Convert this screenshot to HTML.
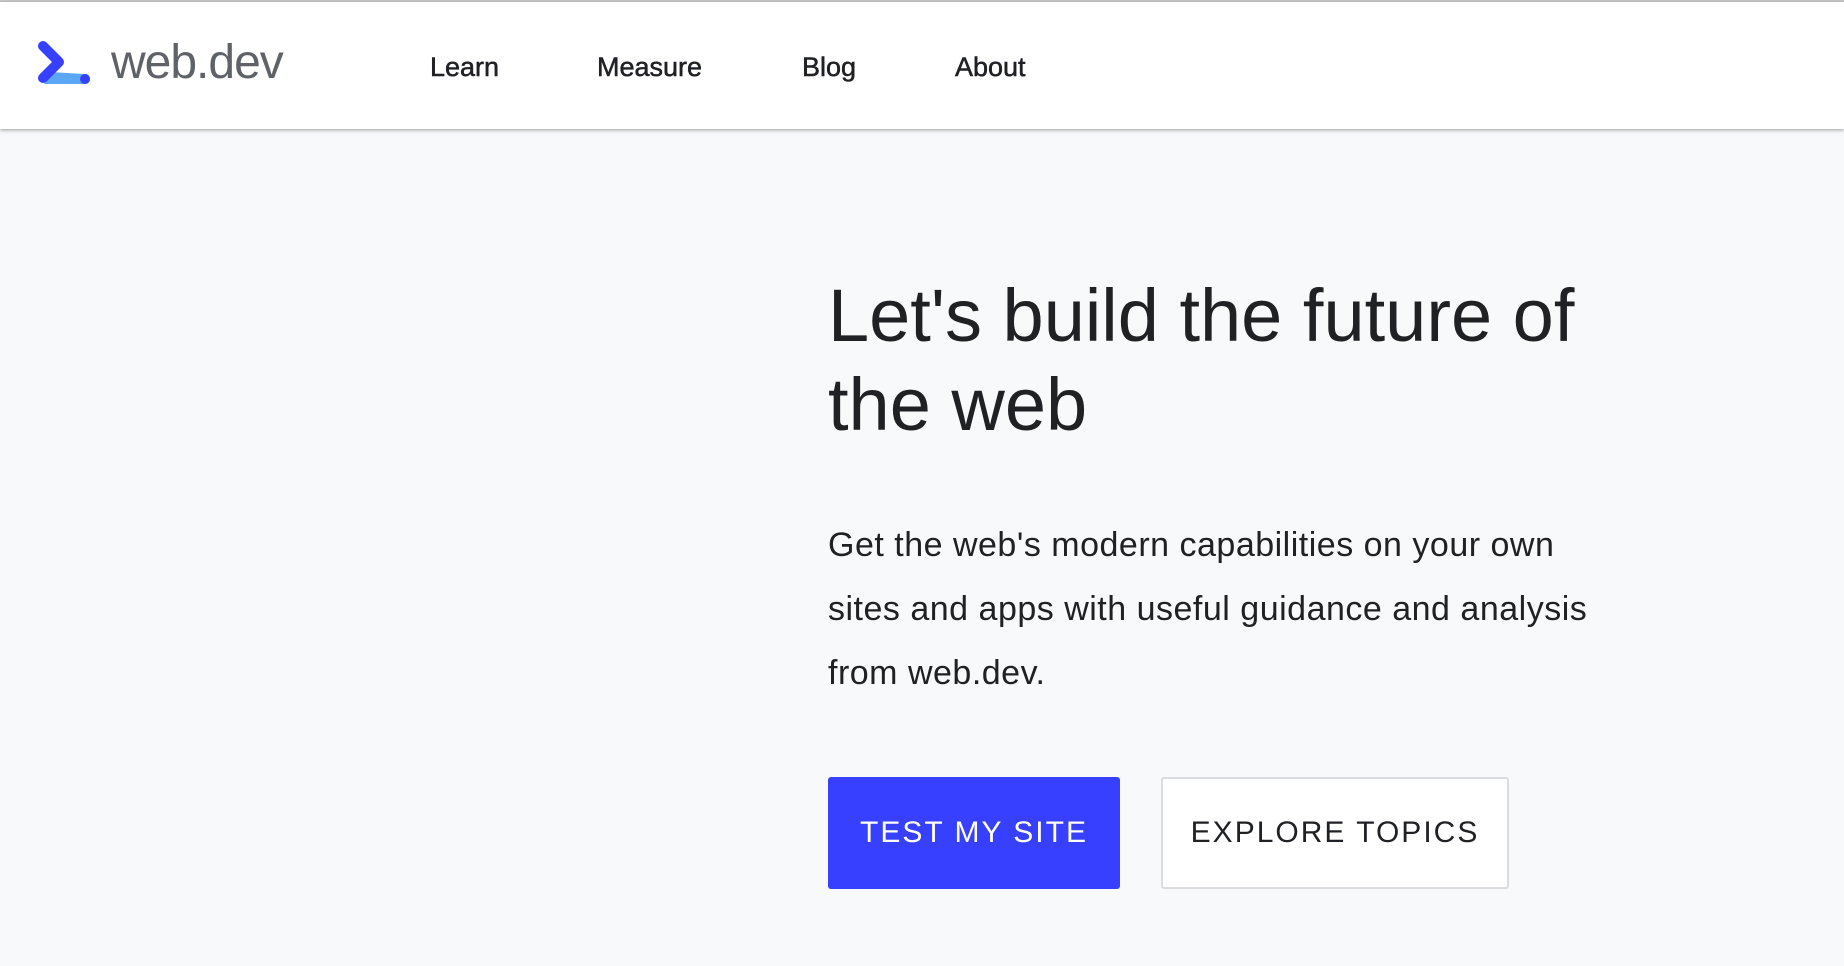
<!DOCTYPE html>
<html><head><meta charset="utf-8"><style>
*{margin:0;padding:0;box-sizing:border-box}
body{width:1844px;height:966px;overflow:hidden;background:#f8f9fa;font-family:"Liberation Sans",sans-serif;color:#202124}
.top{position:absolute;left:0;top:0;width:1844px;height:2px;background:#c8c8c8}
header{position:absolute;left:0;top:2px;width:1844px;height:127px;background:#fff;box-shadow:0 1px 3px rgba(0,0,0,.3),0 2px 6px rgba(0,0,0,.08)}
.logo{position:absolute;left:36px;top:38px}
.brand{position:absolute;left:111px;top:33px;font-size:48px;color:#5f6368;letter-spacing:-1px}
nav a{position:absolute;top:50px;font-size:27px;color:#202124;text-decoration:none;-webkit-text-stroke:0.5px #202124}
h1{position:absolute;left:828px;top:271px;font-size:74px;font-weight:normal;line-height:89px;letter-spacing:0px;white-space:nowrap}
p{position:absolute;left:828px;top:513px;font-size:34px;line-height:64px;white-space:nowrap;letter-spacing:0.5px}
.b{position:absolute;top:777px;height:112px;display:flex;align-items:center;justify-content:center;font-size:30px;letter-spacing:2px;border-radius:3px}
.b1{left:828px;width:292px;background:#3740ff;color:#fff}
.b2{left:1161px;width:348px;background:#fff;color:#202124;border:2px solid #dadce0}
</style></head><body>
<div class="top"></div>
<header>
<svg class="logo" width="56" height="46" viewBox="0 0 56 46">
<path d="M14 32 L48 34 A5 5 0 0 1 50 44 L8 44 Z" fill="#5aa8f5"/>
<path d="M7 6 L23 22 L7 38" fill="none" stroke="#3740ff" stroke-width="10" stroke-linecap="round" stroke-linejoin="round"/>
<circle cx="49" cy="39" r="5" fill="#3740ff"/>
</svg>
<div class="brand">web.dev</div>
<nav><a style="left:430px">Learn</a><a style="left:597px">Measure</a><a style="left:802px">Blog</a><a style="left:955px">About</a></nav>
</header>
<h1>Let's build the future of<br>the web</h1>
<p>Get the web's modern capabilities on your own<br>sites and apps with useful guidance and analysis<br>from web.dev.</p>
<div class="b b1">TEST MY SITE</div>
<div class="b b2">EXPLORE TOPICS</div>
</body></html>
